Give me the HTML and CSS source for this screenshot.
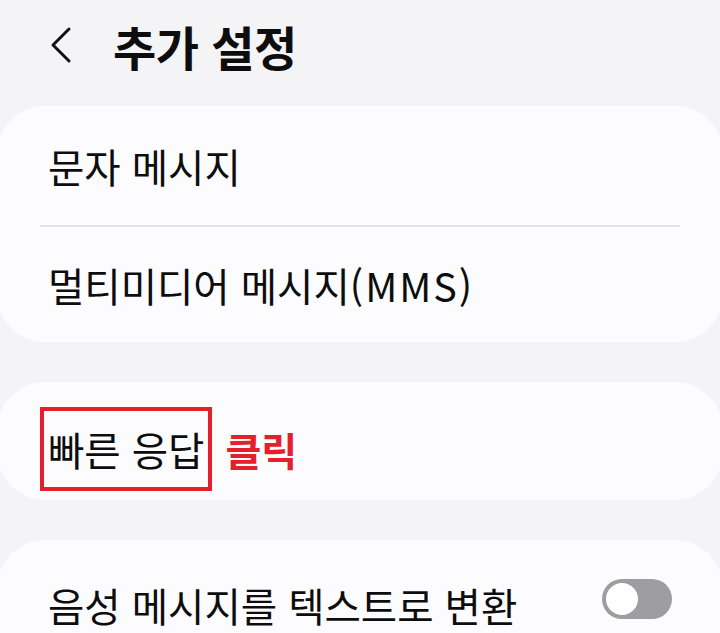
FILE: index.html
```html
<!DOCTYPE html>
<html lang="ko">
<head>
<meta charset="utf-8">
<link rel="stylesheet" href="styles.css">
</head>
<body>
<div class="page">
  <header class="header">
    <svg class="back" width="24" height="40" viewBox="0 0 24 40">
      <polyline points="19,4 3,20 19,36" fill="none" stroke="#111" stroke-width="3" stroke-linecap="round" stroke-linejoin="round"/>
    </svg>
    <h1 class="title">추가 설정</h1>
  </header>

  <section class="card card-first">
    <div class="row row-a"><span class="label">문자 메시지</span></div>
    <div class="divider"></div>
    <div class="row row-b"><span class="label">멀티미디어 메시지<span class="latin">(MMS)</span></span></div>
  </section>

  <section class="card card-second">
    <div class="row row-quick">
      <span class="highlight"><span class="label">빠른 응답</span></span>
      <span class="click">클릭</span>
    </div>
  </section>

  <section class="card card-third">
    <div class="row row-toggle">
      <span class="label label-low">음성 메시지를 텍스트로 변환</span>
      <span class="switch"><span class="knob"></span></span>
    </div>
  </section>
</div>
</body>
</html>
```

FILE: styles.css
```css
html, body {
  margin: 0;
  padding: 0;
}
body {
  background: #f4f4f6;
  font-family: "Noto Sans CJK KR", "Noto Sans", sans-serif;
  color: #0d0d0d;
  overflow: hidden;
  height: 633px;
}
.page {
  width: 720px;
}
.header {
  height: 106px;
  display: flex;
  align-items: center;
  box-sizing: border-box;
  padding-left: 50px;
  padding-bottom: 16px;
}
.back {
  display: block;
  flex: none;
}
.title {
  margin: 0 0 0 39px;
  font-size: 47px;
  font-weight: 700;
  line-height: 1;
  letter-spacing: -0.5px;
}
.card {
  background: #fcfcfe;
  border-radius: 48px;
  margin: 0 -3px 40px -3px;
  padding: 0 3px;
}
.row {
  display: flex;
  align-items: center;
  padding-left: 48px;
  padding-right: 48px;
  box-sizing: border-box;
}
.label {
  font-size: 39.5px;
  line-height: 1;
  font-weight: 400;
}
.latin {
  letter-spacing: 2px;
}
.row-a {
  height: 119px;
}
.divider {
  height: 2px;
  background: #e4e4e6;
  margin: 0 40px;
}
.row-b {
  height: 115px;
}
.card-second {
  height: 118px;
}
.row-quick {
  padding-left: 40px;
  padding-top: 25px;
  align-items: flex-start;
}
.highlight {
  display: inline-flex;
  align-items: center;
  box-sizing: border-box;
  height: 84px;
  border: 4px solid #e3202b;
  padding: 0 4px 0 4px;
}
.click {
  margin-left: 13px;
  color: #e3202b;
  font-weight: 700;
  font-size: 39px;
  line-height: 84px;
}
.card-third {
  height: 140px;
  margin-bottom: 0;
}
.row-toggle {
  height: 118px;
  justify-content: space-between;
}
.label-low {
  padding-top: 12px;
}
.switch {
  width: 70px;
  height: 40px;
  border-radius: 20px;
  background: #9d9da2;
  display: flex;
  align-items: center;
  padding-left: 4px;
  box-sizing: border-box;
}
.knob {
  width: 32px;
  height: 32px;
  border-radius: 50%;
  background: #ffffff;
}
```
